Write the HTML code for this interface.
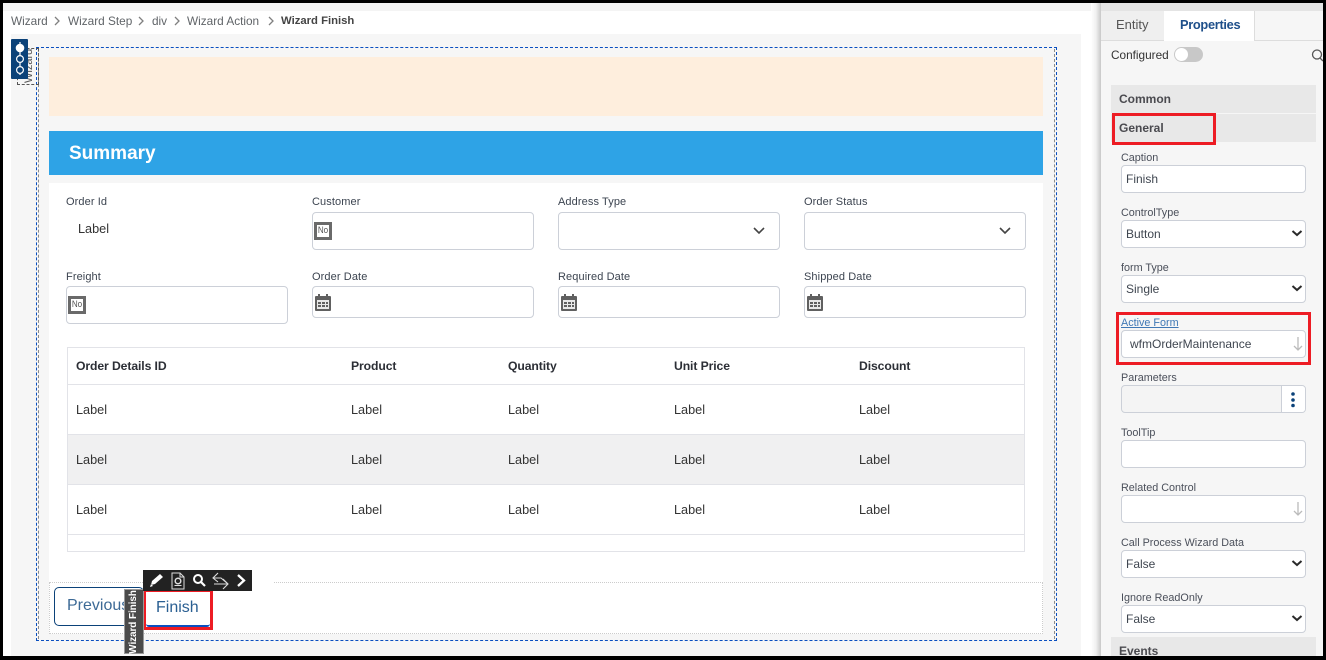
<!DOCTYPE html>
<html><head><meta charset="utf-8"><style>
html,body{margin:0;padding:0;background:#fff}
#p{position:relative;width:1326px;height:660px;overflow:hidden;background:#fff;font-family:"Liberation Sans",sans-serif;color:#333}
#p div,#p span.a,#p svg{position:absolute}
.t{white-space:nowrap;font-size:11.8px;line-height:14px}
.lb{color:#3c4450;font-size:11px;letter-spacing:.1px}
.in{background:#fff;border:1px solid #ccd0d8;border-radius:4px;box-sizing:border-box}
.cell{font-size:12.7px;line-height:14px;color:#333;white-space:nowrap}
.hd{font-size:12.2px;line-height:14px;color:#2c2f36;font-weight:bold;white-space:nowrap;letter-spacing:-.1px}
.hl{background:#e2e3e8;height:1px}
.r{border:3px solid #ed1c24;box-sizing:border-box}
.pl{color:#4a4f5a;font-size:10.8px;line-height:13px;white-space:nowrap}
.pv{color:#3f4650;font-size:12px;line-height:14px;white-space:nowrap}
.sec{background:#e8e8e8;color:#4a4a4f;font-weight:bold;font-size:12px;line-height:28px;padding-left:8px;box-sizing:border-box}
.no{box-sizing:border-box;width:18px;height:18px;border:3px solid #6a6a6a;background:#fff;overflow:hidden}
.no span{display:block;font-size:9.500px;line-height:12px;color:#555;text-align:center;transform:scaleX(.85);margin:0 -2px}
</style></head><body><div id="p">
<div style="left:0;top:3px;width:1091px;height:8px;background:#f4f4f4"></div>
<div style="left:11px;top:34px;width:1070px;height:625px;background:#f6f6f6"></div>

<!-- breadcrumb -->
<div class="t" style="left:11px;top:14px;color:#606468">Wizard</div>
<div class="t" style="left:68px;top:14px;color:#606468">Wizard Step</div>
<div class="t" style="left:152px;top:14px;color:#606468">div</div>
<div class="t" style="left:187px;top:14px;color:#606468">Wizard Action</div>
<div class="t" style="left:281px;top:14px;color:#444;font-weight:bold;font-size:11.300px">Wizard Finish</div>
<svg style="left:0;top:0" width="300" height="34" fill="none" stroke="#808080" stroke-width="1.3"><path d="M55 17l4 4-4 4M139 17l4 4-4 4M175 17l4 4-4 4M269 17l4 4-4 4"/></svg>

<!-- dashed wizard frames -->
<div style="left:36px;top:47px;width:1021px;height:594px;box-sizing:border-box;border:1px dashed #0a4fc0"></div>
<div style="left:38px;top:49px;width:1017px;height:590px;box-sizing:border-box;border:1px dashed #8a8a8a;border-top:none;border-bottom:none"></div>
<div style="left:17px;top:48px;width:22px;height:37px;box-sizing:border-box;border:1px dashed #555"></div>
<div class="t" style="left:11px;top:59px;width:36px;font-size:11px;line-height:12px;color:#555;transform:rotate(-90deg)">Wizard</div>
<div style="left:11px;top:39px;width:17px;height:40px;background:#0b4279;border-radius:1px"></div>
<svg style="left:11px;top:39px" width="17" height="40" fill="none" stroke="#fff" stroke-width="1.2"><path d="M9 3v33"/><circle cx="9" cy="9" r="3.700" fill="#fff"/><circle cx="9" cy="20" r="3.400" fill="#0b4279"/><circle cx="9" cy="31" r="3.400" fill="#0b4279"/></svg>

<!-- banners -->
<div style="left:49px;top:57px;width:994px;height:59px;background:#feeedd"></div>
<div style="left:49px;top:131px;width:994px;height:44px;background:#2ea3e6"></div>
<div style="left:69px;top:142px;font-size:19px;line-height:24px;color:#fff;font-weight:bold;white-space:nowrap">Summary</div>
<div style="left:49px;top:183px;width:994px;height:451px;background:#fff"></div>

<!-- form row 1 -->
<div class="t lb" style="left:66px;top:195px">Order Id</div>
<div class="t" style="left:78px;top:222px;font-size:12.700px;color:#333">Label</div>
<div class="t lb" style="left:312px;top:195px">Customer</div>
<div class="in" style="left:312px;top:212px;width:222px;height:38px"></div>
<div class="t lb" style="left:558px;top:195px">Address Type</div>
<div class="in" style="left:558px;top:212px;width:222px;height:38px"></div>
<div class="t lb" style="left:804px;top:195px">Order Status</div>
<div class="in" style="left:804px;top:212px;width:222px;height:38px"></div>
<svg style="left:750px;top:224px" width="270" height="14" fill="none" stroke="#444" stroke-width="1.6"><path d="M4 4l5 5 5-5M250 4l5 5 5-5"/></svg>

<!-- form row 2 -->
<div class="t lb" style="left:66px;top:270px">Freight</div>
<div class="in" style="left:66px;top:286px;width:222px;height:38px"></div>
<div class="t lb" style="left:312px;top:270px">Order Date</div>
<div class="in" style="left:312px;top:286px;width:222px;height:32px"></div>
<div class="t lb" style="left:558px;top:270px">Required Date</div>
<div class="in" style="left:558px;top:286px;width:222px;height:32px"></div>
<div class="t lb" style="left:804px;top:270px">Shipped Date</div>
<div class="in" style="left:804px;top:286px;width:222px;height:32px"></div>

<!-- No icons -->
<div class="no" style="left:314px;top:222px"><span>No</span></div>
<div class="no" style="left:68px;top:296px"><span>No</span></div>

<!-- calendar icons -->
<svg style="left:314px;top:293px" width="18" height="19"><path fill="#606060" d="M1 4a1 1 0 0 1 1-1h2V1h2v2h6V1h2v2h2a1 1 0 0 1 1 1v13a1 1 0 0 1-1 1H2a1 1 0 0 1-1-1z"/><path fill="#e8e8e8" d="M3 7h12v9H3z"/><path fill="#606060" d="M4 9h3v2H4zM8 9h3v2H8zM12 9h2v2h-2zM4 12h3v2H4zM8 12h3v2H8zM12 12h2v2h-2z"/></svg>
<svg style="left:560px;top:293px" width="18" height="19"><path fill="#606060" d="M1 4a1 1 0 0 1 1-1h2V1h2v2h6V1h2v2h2a1 1 0 0 1 1 1v13a1 1 0 0 1-1 1H2a1 1 0 0 1-1-1z"/><path fill="#e8e8e8" d="M3 7h12v9H3z"/><path fill="#606060" d="M4 9h3v2H4zM8 9h3v2H8zM12 9h2v2h-2zM4 12h3v2H4zM8 12h3v2H8zM12 12h2v2h-2z"/></svg>
<svg style="left:806px;top:293px" width="18" height="19"><path fill="#606060" d="M1 4a1 1 0 0 1 1-1h2V1h2v2h6V1h2v2h2a1 1 0 0 1 1 1v13a1 1 0 0 1-1 1H2a1 1 0 0 1-1-1z"/><path fill="#e8e8e8" d="M3 7h12v9H3z"/><path fill="#606060" d="M4 9h3v2H4zM8 9h3v2H8zM12 9h2v2h-2zM4 12h3v2H4zM8 12h3v2H8zM12 12h2v2h-2z"/></svg>

<!-- table -->
<div style="left:67px;top:347px;width:958px;height:205px;box-sizing:border-box;border:1px solid #e2e3e8"></div>
<div style="left:68px;top:435px;width:956px;height:49px;background:#f0f0f1"></div>
<div class="hl" style="left:68px;top:384px;width:956px"></div>
<div class="hl" style="left:68px;top:434px;width:956px"></div>
<div class="hl" style="left:68px;top:484px;width:956px"></div>
<div class="hl" style="left:68px;top:534px;width:956px"></div>
<div class="hd" style="left:76px;top:359px">Order Details ID</div>
<div class="hd" style="left:351px;top:359px">Product</div>
<div class="hd" style="left:508px;top:359px">Quantity</div>
<div class="hd" style="left:674px;top:359px">Unit Price</div>
<div class="hd" style="left:859px;top:359px">Discount</div>
<div class="cell" style="left:76px;top:403px">Label</div><div class="cell" style="left:351px;top:403px">Label</div><div class="cell" style="left:508px;top:403px">Label</div><div class="cell" style="left:674px;top:403px">Label</div><div class="cell" style="left:859px;top:403px">Label</div>
<div class="cell" style="left:76px;top:453px">Label</div><div class="cell" style="left:351px;top:453px">Label</div><div class="cell" style="left:508px;top:453px">Label</div><div class="cell" style="left:674px;top:453px">Label</div><div class="cell" style="left:859px;top:453px">Label</div>
<div class="cell" style="left:76px;top:503px">Label</div><div class="cell" style="left:351px;top:503px">Label</div><div class="cell" style="left:508px;top:503px">Label</div><div class="cell" style="left:674px;top:503px">Label</div><div class="cell" style="left:859px;top:503px">Label</div>

<!-- footer buttons -->
<div style="left:49px;top:582px;width:994px;height:52px;box-sizing:border-box;border:1px dotted #ccc;background:#fff"></div>
<div style="left:252px;top:581px;width:22px;height:3px;background:#fff"></div>
<div style="left:54px;top:587px;width:90px;height:39px;box-sizing:border-box;border:1px solid #0b4279;border-radius:5px;background:#fff"></div>
<div class="t" style="left:67px;top:596px;font-size:16px;line-height:20px;color:#3d6a96">Previous</div>
<div style="left:146px;top:592px;width:64px;height:35px;box-sizing:border-box;background:#fff;border-bottom:2px solid #0a4fc0;border-radius:3px"></div>
<div class="r" style="left:143px;top:589px;width:70px;height:41px"></div>
<div class="t" style="left:156px;top:598px;font-size:16px;line-height:20px;color:#2a5f92">Finish</div>
<div style="left:124px;top:589px;width:20px;height:65px;background:#4a4a4a;border:1px solid #999;box-sizing:border-box"></div>
<div class="t" style="left:101px;top:615px;width:66px;font-size:10px;line-height:14px;color:#fff;font-weight:bold;transform:rotate(-90deg);text-align:center;letter-spacing:-.1px">Wizard Finish</div>

<!-- toolbar -->
<div style="left:143px;top:570px;width:109px;height:21px;background:#222"></div>
<svg style="left:143px;top:570px" width="109" height="21" fill="none"><path fill="#fff" d="M8 15l1-4 8-7 3 3-8 7zM7 17l3-1-2-2z"/><path stroke="#ddd" d="M29 3h8l4 4v12H29zM37 3v4h4"/><circle cx="35" cy="11" r="2.800" stroke="#ddd" stroke-width="1.500"/><path stroke="#ddd" d="M31.500 15.500h7"/><circle cx="55" cy="9" r="4" stroke="#fff" stroke-width="2"/><path stroke="#fff" stroke-width="2.200" d="M58 12l4 4"/><path stroke="#ddd" stroke-width="1.100" d="M75 3l-5 5 5 4M70 8h8l7 6M71 14h14M80 9l5 5-5 5"/><path stroke="#fff" stroke-width="2.300" d="M95 5l6 5.500-6 5.500"/></svg>

<!-- side panel -->
<div style="left:1091px;top:3px;width:10px;height:653px;background:linear-gradient(to right,#fff 0,#f0f0f0 50%,#c8c8c8 100%)"></div>
<div style="left:1101px;top:3px;width:222px;height:8px;background:#e4e4e4"></div>
<div style="left:1101px;top:11px;width:222px;height:645px;background:#f6f6f6"></div>
<div style="left:1101px;top:11px;width:63px;height:30px;background:#efefef;border-bottom:1px solid #ddd;box-sizing:border-box"></div>
<div style="left:1164px;top:11px;width:91px;height:30px;background:#fff;border-right:1px solid #ddd;box-sizing:border-box"></div>
<div style="left:1255px;top:40px;width:68px;height:1px;background:#ddd"></div>
<div class="t" style="left:1116px;top:17px;font-size:13px;line-height:15px;color:#555">Entity</div>
<div class="t" style="left:1180px;top:17px;font-size:12.800px;line-height:15px;color:#1e4f8a;font-weight:bold;letter-spacing:-.3px">Properties</div>
<div class="t" style="left:1111px;top:48px;color:#333;font-size:11.800px">Configured</div>
<div style="left:1174px;top:47px;width:29px;height:15px;border-radius:8px;background:#c8c8c8"></div>
<div style="left:1175px;top:48px;width:13px;height:13px;border-radius:7px;background:#fff"></div>
<svg style="left:1310px;top:48px" width="13" height="14" fill="none" stroke="#555" stroke-width="1.300"><circle cx="7" cy="6.500" r="4.500"/><path d="M10 10l3 3"/></svg>

<div class="sec" style="left:1111px;top:85px;width:205px;height:28px">Common</div>
<div class="sec" style="left:1111px;top:114px;width:205px;height:28px">General</div>
<div class="r" style="left:1112px;top:113px;width:104px;height:32px"></div>

<div class="pl" style="left:1121px;top:152px">Caption</div>
<div class="in" style="left:1121px;top:165px;width:185px;height:28px"></div>
<div class="pv" style="left:1126px;top:172px">Finish</div>

<div class="pl" style="left:1121px;top:207px">ControlType</div>
<div class="in" style="left:1121px;top:220px;width:185px;height:28px"></div>
<div class="pv" style="left:1126px;top:227px">Button</div>

<div class="pl" style="left:1121px;top:262px">form Type</div>
<div class="in" style="left:1121px;top:275px;width:185px;height:28px"></div>
<div class="pv" style="left:1126px;top:282px">Single</div>

<div class="pl" style="left:1121px;top:317px;color:#3f78b5;text-decoration:underline">Active Form</div>
<div class="in" style="left:1121px;top:330px;width:185px;height:28px"></div>
<div class="pv" style="left:1130px;top:337px">wfmOrderMaintenance</div>
<svg style="left:1291px;top:336px" width="14" height="16" fill="none" stroke="#bbb" stroke-width="1.300"><path d="M7 1v13M3 10l4 4 4-4"/></svg>
<div class="r" style="left:1116px;top:312px;width:195px;height:53px"></div>

<div class="pl" style="left:1121px;top:372px">Parameters</div>
<div class="in" style="left:1121px;top:385px;width:185px;height:28px;background:#f4f4f4"></div>
<div style="left:1281px;top:386px;width:1px;height:26px;background:#ccd0d8"></div>
<div style="left:1282px;top:386px;width:23px;height:26px;background:#fff;border-radius:0 3px 3px 0"></div>
<svg style="left:1288px;top:390px" width="10" height="18" fill="#0b4279"><circle cx="5" cy="4" r="1.800"/><circle cx="5" cy="10" r="1.800"/><circle cx="5" cy="15.500" r="1.800"/></svg>

<div class="pl" style="left:1121px;top:427px">ToolTip</div>
<div class="in" style="left:1121px;top:440px;width:185px;height:28px"></div>

<div class="pl" style="left:1121px;top:482px">Related Control</div>
<div class="in" style="left:1121px;top:495px;width:185px;height:28px"></div>
<svg style="left:1291px;top:501px" width="14" height="16" fill="none" stroke="#bbb" stroke-width="1.300"><path d="M7 1v13M3 10l4 4 4-4"/></svg>

<div class="pl" style="left:1121px;top:537px">Call Process Wizard Data</div>
<div class="in" style="left:1121px;top:550px;width:185px;height:28px"></div>
<div class="pv" style="left:1126px;top:557px">False</div>

<div class="pl" style="left:1121px;top:592px">Ignore ReadOnly</div>
<div class="in" style="left:1121px;top:605px;width:185px;height:28px"></div>
<div class="pv" style="left:1126px;top:612px">False</div>

<svg style="left:1290px;top:225px" width="14" height="400" fill="none" stroke="#2a2a2a" stroke-width="2"><path d="M2.500 6l4.500 4 4.500-4M2.500 61l4.500 4 4.500-4M2.500 336l4.500 4 4.500-4M2.500 391l4.500 4 4.500-4"/></svg>

<div class="sec" style="left:1111px;top:637px;width:205px;height:28px">Events</div>

<!-- black screenshot frame -->
<div style="left:0;top:0;width:1326px;height:3px;background:#000"></div>
<div style="left:0;top:0;width:3px;height:660px;background:#000"></div>
<div style="left:1323px;top:0;width:3px;height:660px;background:#000"></div>
<div style="left:0;top:656px;width:1326px;height:4px;background:#000"></div>
</div></body></html>
